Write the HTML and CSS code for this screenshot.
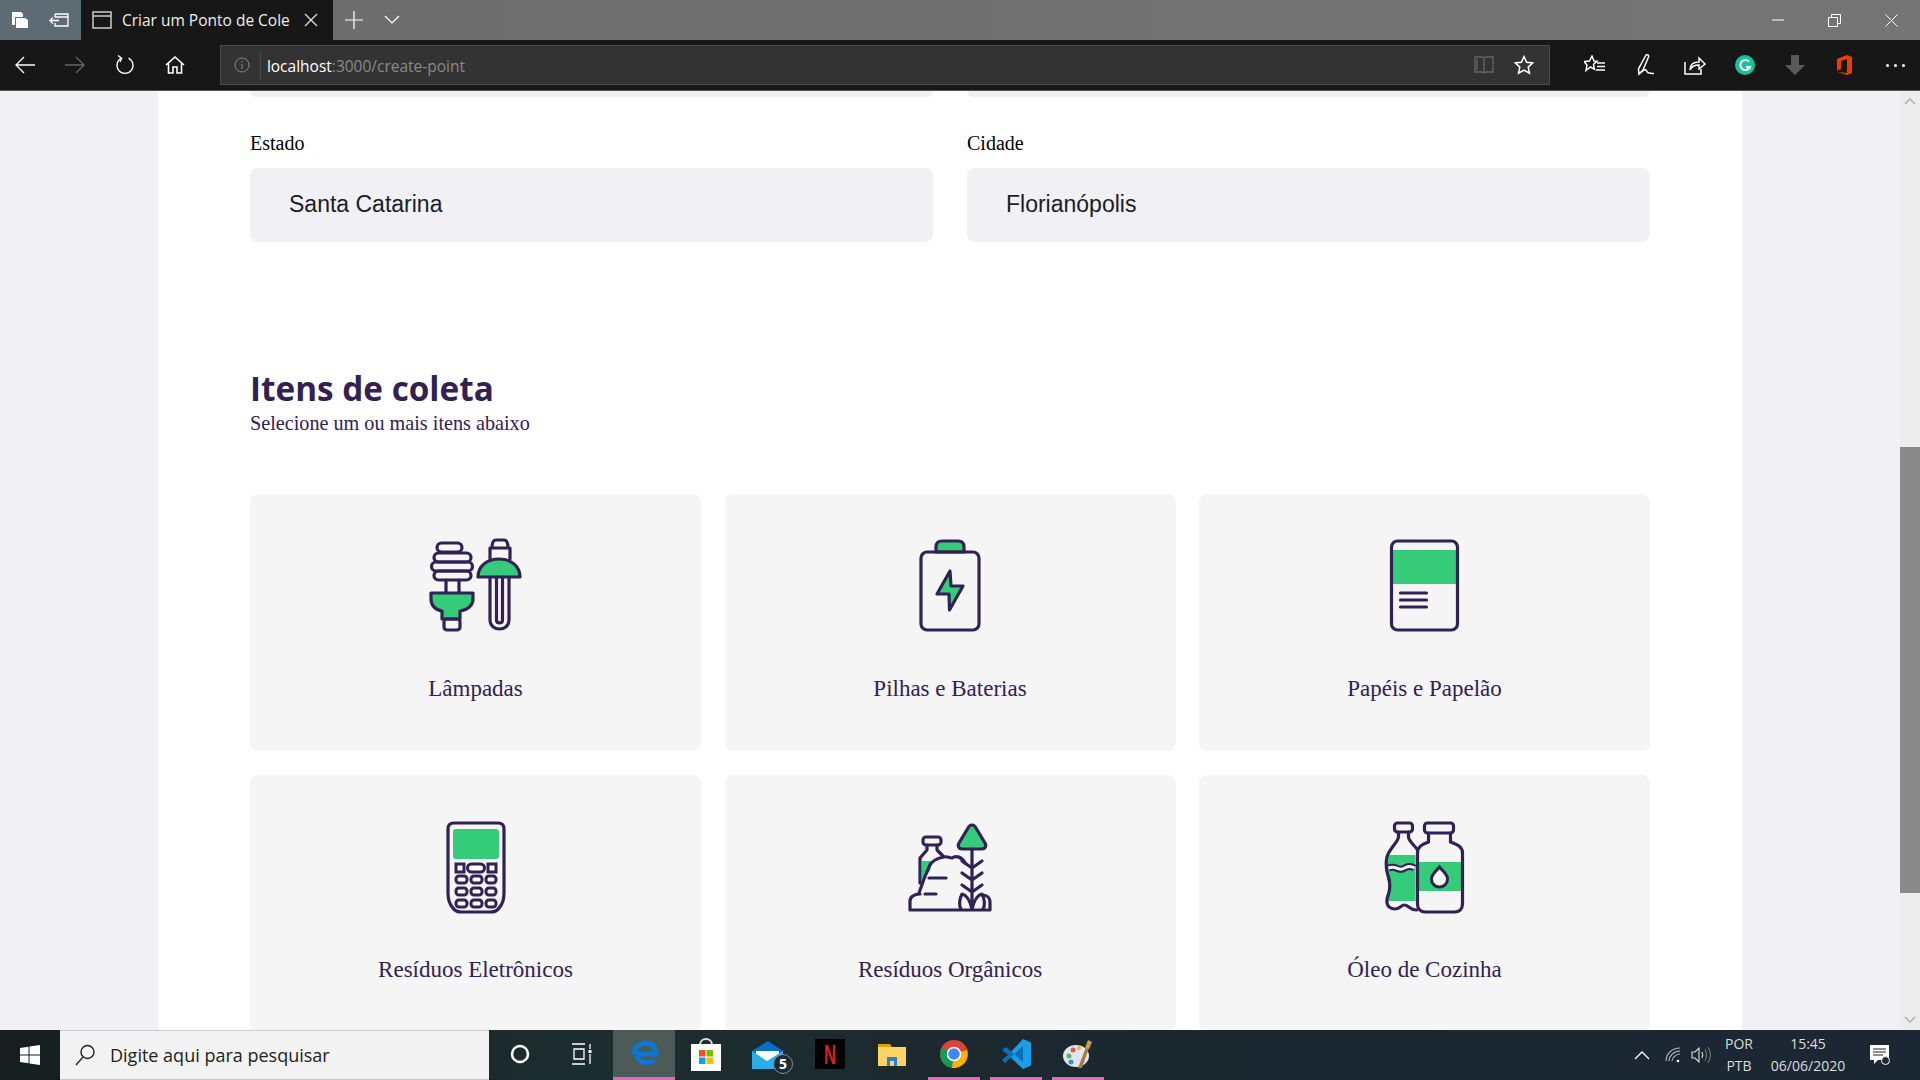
FILE: index.html
```html
<!DOCTYPE html>
<html lang="pt-BR">
<head>
    <meta charset="utf-8">
    <title>Criar um Ponto de Coleta</title>
    <link rel="stylesheet" href="styles.css">
</head>
<body>
    <!-- browser title bar -->
    <div class="titlebar">
        <div class="tab-tools">
            <div class="tool-btn">
                <svg width="20" height="20" viewBox="0 0 20 20"><path d="M2 2h9l2 2v3H5v8H2z" fill="#fff"/><path d="M6 8h9l3 2v8H6z" fill="#fff"/></svg>
            </div>
            <div class="tool-btn">
                <svg width="22" height="20" viewBox="0 0 22 20" fill="none" stroke="#fff" stroke-width="1.3"><path d="M6 4h13v12H6v-3M6 7V4M6 7h13"/><path d="M10 10.500H1M4 7.500l-3 3 3 3"/></svg>
            </div>
        </div>
        <div class="tab">
            <svg width="20" height="20" viewBox="0 0 20 20" fill="none" stroke="#ccc" stroke-width="1.500"><path d="M1 2h18v16H1zM1 6h18"/></svg>
            <span class="tab-title">Criar um Ponto de Coleta</span>
            <svg width="14" height="14" viewBox="0 0 14 14" stroke="#ddd" stroke-width="1.400"><path d="M1 1l12 12M13 1L1 13"/></svg>
        </div>
        <div class="tool-btn new-tab">
            <svg width="18" height="18" viewBox="0 0 18 18" stroke="#fff" stroke-width="1.200"><path d="M9 0v18M0 9h18"/></svg>
        </div>
        <div class="tool-btn tab-list">
            <svg width="16" height="10" viewBox="0 0 16 10" fill="none" stroke="#fff" stroke-width="1.200"><path d="M1 1l7 7 7-7"/></svg>
        </div>
        <div class="win-controls">
            <div class="win-btn"><svg width="12" height="12" viewBox="0 0 12 12" stroke="#fff"><path d="M0 6h12"/></svg></div>
            <div class="win-btn"><svg width="13" height="13" viewBox="0 0 13 13" fill="none" stroke="#fff"><path d="M.5 3.500h9v9h-9zM3.500 3.500v-3h9v9h-3"/></svg></div>
            <div class="win-btn"><svg width="13" height="13" viewBox="0 0 13 13" stroke="#fff"><path d="M.5.500l12 12M12.500.500l-12 12"/></svg></div>
        </div>
    </div>

    <!-- browser toolbar -->
    <div class="toolbar">
        <div class="nav-btn"><svg width="20" height="18" viewBox="0 0 20 18" fill="none" stroke="#fff" stroke-width="1.300"><path d="M20 9H1M9 1L1 9l8 8"/></svg></div>
        <div class="nav-btn"><svg width="20" height="18" viewBox="0 0 20 18" fill="none" stroke="#666" stroke-width="1.300"><path d="M0 9h19M11 1l8 8-8 8"/></svg></div>
        <div class="nav-btn"><svg width="20" height="22" viewBox="0 0 20 22" fill="none" stroke="#fff" stroke-width="1.300"><path d="M13.500 4.200a8 8 0 1 1-7 0M3 1.500l3.700 2.700L5 8"/></svg></div>
        <div class="nav-btn"><svg width="20" height="20" viewBox="0 0 20 20" fill="none" stroke="#fff" stroke-width="1.600"><path d="M1 10l9-8 9 8M3.500 8.500V18H8v-6h4v6h4.500V8.500"/></svg></div>
        <div class="address">
            <svg class="info" width="16" height="16" viewBox="0 0 16 16" fill="none" stroke="#888"><circle cx="8" cy="8" r="7"/><path d="M8 7v5M8 4v1.500"/></svg>
            <span class="url"><span class="host">localhost</span>:3000/create-point</span>
            <svg class="book" width="20" height="18" viewBox="0 0 20 18" fill="none" stroke="#666" stroke-width="1.300"><path d="M1 1h7l2 1 2-1h7v15h-7l-2 1-2-1H1zM10 2v15M3 3v11"/></svg>
            <svg class="star" width="20" height="20" viewBox="0 0 20 20" fill="none" stroke="#fff" stroke-width="1.500"><path d="M10 1.500l2.600 5.700 6.200.7-4.600 4.200 1.300 6.100L10 15.200l-5.500 3 1.300-6.100L1.200 7.900l6.200-.7z"/></svg>
        </div>
        <div class="actions">
            <div class="nav-btn"><svg width="22" height="20" viewBox="0 0 22 20" fill="none" stroke="#fff" stroke-width="1.500"><path d="M8 1l2 5 3 .3-3.500 3 1 5L6.500 12l-4.500 3.500 1-5.500L0 6.500l5.500-.5zM13 8h8M13 11.500h8M12 15h9"/></svg></div>
            <div class="nav-btn"><svg width="22" height="22" viewBox="0 0 22 22" fill="none" stroke="#fff" stroke-width="1.500"><path d="M12 1c2-.7 3 .5 2.500 2L9 16l-4 4-.5-5zM5 20c3-2 5-5 7-4 1 .7 1 3 3 3 2 .2 3 .5 5 .5"/></svg></div>
            <div class="nav-btn"><svg width="22" height="20" viewBox="0 0 22 20" fill="none" stroke="#fff" stroke-width="1.500"><path d="M1 7v12h16v-5M6 15c0-6 4-8 9-8V3l6 6-6 5v-4c-4 0-7 1-9 5z"/></svg></div>
            <div class="nav-btn"><svg width="20" height="20" viewBox="0 0 20 20"><circle cx="10" cy="10" r="10" fill="#15c39a"/><path d="M14 6.500a5 5 0 1 0 1 5.500h-4" fill="none" stroke="#fff" stroke-width="2"/></svg></div>
            <div class="nav-btn"><svg width="20" height="20" viewBox="0 0 20 20"><path d="M6 0h8v10h6l-10 10L0 10h6z" fill="#5a5a5a"/></svg></div>
            <div class="nav-btn"><svg width="16" height="20" viewBox="0 0 16 20"><path d="M0 4l10-4 5 2v16l-5 2-10-3 10 1V4L4 6v8l-4 1.500z" fill="#ea3e00"/></svg></div>
            <div class="nav-btn more"><span class="dot"></span><span class="dot"></span><span class="dot"></span></div>
        </div>
    </div>

    <!-- page -->
    <div class="viewport">
        <div class="page">
            <form class="form-card">
                <div class="field-row">
                    <div class="field-stub"></div>
                    <div class="field-stub"></div>
                </div>
                <div class="field-row selects">
                    <div class="field">
                        <label>Estado</label>
                        <div class="select">Santa Catarina</div>
                    </div>
                    <div class="field">
                        <label>Cidade</label>
                        <div class="select">Florianópolis</div>
                    </div>
                </div>

                <h2>Itens de coleta</h2>
                <p class="hint">Selecione um ou mais itens abaixo</p>

                <div class="items">
                    <div class="item">
                        <svg class="item-icon" viewBox="26 17 100 96">
                            <path class="fill" d="M31 72h42v6c0 6-5 11-13 12v8H42v-8c-7-1-11-6-11-12z"/>
                            <path class="fill" d="M78 56c0-11 9-18 21-18s21 7 21 18z"/>
                            <rect class="line" x="37" y="22" width="25" height="9" rx="4.500"/>
                            <rect class="line" x="34" y="32" width="37" height="9" rx="4.500"/>
                            <rect class="line" x="31.500" y="41" width="41" height="9" rx="4.500"/>
                            <rect class="line" x="34" y="50" width="37" height="9" rx="4.500"/>
                            <path class="line" d="M46 59v13M59 59v13M31 72h42v6c0 6-5 11-13 12v8H42v-8c-7-1-11-6-11-12z"/>
                            <rect class="line" x="44" y="98" width="16" height="11" rx="3"/>
                            <path class="line" d="M92 27c0-5 1-8 4-8h8c3 0 4 3 4 8zM90 38V27h20v11M78 56c0-11 9-18 21-18s21 7 21 18z"/>
                            <path class="line" d="M90 56v43c0 12 19 12 19 0V56M96.500 56v43c0 4 6 4 6 0V56"/>
                        </svg>
                        <span>Lâmpadas</span>
                    </div>
                    <div class="item">
                        <svg class="item-icon" viewBox="10 17 100 96">
                            <path class="fill line" d="M46 31v-5c0-4 2-6 6-6h16c4 0 6 2 6 6v5z"/>
                            <rect class="line" x="31" y="31" width="58" height="78" rx="6"/>
                            <path class="fill line" d="M60 50L47 73h12l.5 16L73 65H61z"/>
                        </svg>
                        <span>Pilhas e Baterias</span>
                    </div>
                    <div class="item">
                        <svg class="item-icon" viewBox="4.500 17 100 96">
                            <rect class="fill" x="22" y="29" width="64" height="34"/>
                            <rect class="line" x="21" y="20" width="66" height="89" rx="6"/>
                            <path class="line" d="M30 72h26M30 79h26M30 86h26"/>
                        </svg>
                        <span>Papéis e Papelão</span>
                    </div>
                    <div class="item">
                        <svg class="item-icon" viewBox="-4 8 100 96">
                            <rect class="fill" x="23" y="18" width="46" height="30" rx="3"/>
                            <path class="line" d="M24 12h44c4 0 6 2 6 6v64c0 7-2 12-5 15-2 3-5 4-8 4H31c-3 0-6-1-8-4-3-3-5-8-5-15V18c0-4 2-6 6-6z"/>
                            <rect class="key" x="26" y="53" width="8" height="8"/>
                            <rect class="key" x="37.500" y="53" width="17" height="8" rx="4"/>
                            <rect class="key" x="58" y="53" width="8" height="8"/>
                            <rect class="key" x="26" y="65" width="11" height="7" rx="3"/>
                            <rect class="key" x="41" y="65" width="11" height="7" rx="3"/>
                            <rect class="key" x="56" y="65" width="10" height="7" rx="3"/>
                            <rect class="key" x="26" y="77" width="11" height="7" rx="3"/>
                            <rect class="key" x="41" y="77" width="11" height="7" rx="3"/>
                            <rect class="key" x="56" y="77" width="10" height="7" rx="3"/>
                            <rect class="key" x="26" y="89" width="11" height="7" rx="3"/>
                            <rect class="key" x="41" y="89" width="11" height="7" rx="3"/>
                            <rect class="key" x="56" y="89" width="10" height="7" rx="3"/>
                        </svg>
                        <span>Resíduos Eletrônicos</span>
                    </div>
                    <div class="item">
                        <svg class="item-icon" viewBox="10 8 100 96">
                            <path class="fill" d="M32 50h10l-2 10-8 8z"/>
                            <path class="fill line" d="M82 14c-2 0-3 1-4 3L69 32c-2 3 0 6 3 6h20c3 0 5-3 3-6L86 17c-1-2-2-3-4-3z"/>
                            <rect class="line" x="33" y="26" width="18" height="8" rx="3"/>
                            <path class="line" d="M37 34v5l-7 8v25M47 34v5l6 6"/>
                            <path class="line" d="M29 82l5-14 5-12c2-6 9-9 15-10 3-1 5 1 8 1 4-3 10-1 13 5"/>
                            <path class="line" d="M39 67h17M35 83h11"/>
                            <path class="line" d="M20 99v-9c0-4 4-7 10-7M20 99h80v-8c0-3-2-7-8-7"/>
                            <path class="line" d="M82 38v60M72 50l10 7 10-7M72 62l10 7 10-7M72 74l10 7 10-7M82 98c-2-8-5-14-10-15-3 5-3 12-1 15M82 98c2-8 5-14 10-15 3 5 3 12 1 15"/>
                        </svg>
                        <span>Resíduos Orgânicos</span>
                    </div>
                    <div class="item">
                        <svg class="item-icon" viewBox="4.500 8 100 96">
                            <path class="fill" d="M18 44h27v46H16c-1-4 2-8 2-14 0-4-2-8-2-14 0-7 0-12 2-18z"/>
                            <path class="fill" d="M47 51h45v29H47z"/>
                            <path class="wave-edge" d="M18 57c7-3 10 3 14 1s7-4 12-1"/>
                            <path class="wave" d="M18 57c7-3 10 3 14 1s7-4 12-1"/>
                            <rect class="line" x="24" y="12" width="18" height="9" rx="3"/>
                            <path class="line" d="M28 21v5c0 5-11 13-12 22-1 7 0 12 2 18 2 7 2 11 0 17-2 5-4 14 6 15 6 0 6-4 10-4 4 0 5 5 12 5"/>
                            <path class="line" d="M38 21v5c0 4 6 8 9 13"/>
                            <rect class="line" x="54" y="12" width="29" height="10" rx="3"/>
                            <path class="line" d="M58 22v9c-5 2-11 4-11 11v51c0 5 3 8 8 8h29c5 0 8-3 8-8V42c0-7-7-9-12-11v-9"/>
                            <path class="drop" d="M69 56c-3 4-8 7-8 12 0 5 4 8 8 8s8-3 8-8c0-5-5-8-8-12z"/>
                        </svg>
                        <span>Óleo de Cozinha</span>
                    </div>
                </div>
            </form>
        </div>
        <div class="scrollbar">
            <div class="arrow"><svg width="12" height="8" viewBox="0 0 12 8" fill="none" stroke="#aaa" stroke-width="1.300"><path d="M1 7l5-5 5 5"/></svg></div>
            <div class="thumb"></div>
            <div class="arrow arrow-down"><svg width="12" height="8" viewBox="0 0 12 8" fill="none" stroke="#aaa" stroke-width="1.300"><path d="M1 1l5 5 5-5"/></svg></div>
        </div>
    </div>

    <!-- windows taskbar -->
    <div class="taskbar">
        <div class="start">
            <svg width="20" height="20" viewBox="0 0 20 20" fill="#fff"><path d="M0 3l8.500-1.200v7.700H0zM9.500 1.600L20 0v9.500H9.500zM0 10.500h8.500v7.700L0 17zM9.500 10.500H20V20L9.500 18.400z"/></svg>
        </div>
        <div class="search">
            <svg width="20" height="22" viewBox="0 0 20 22" fill="none" stroke="#222" stroke-width="1.400"><circle cx="12.500" cy="8" r="6.500"/><path d="M8 13l-7 8"/></svg>
            <span>Digite aqui para pesquisar</span>
        </div>
        <div class="task-btn"><svg width="20" height="20" viewBox="0 0 20 20" fill="none" stroke="#fff" stroke-width="2.500"><circle cx="10" cy="10" r="8"/></svg></div>
        <div class="task-btn"><svg width="20" height="22" viewBox="0 0 20 22" fill="none" stroke="#fff" stroke-width="1.300"><path d="M0 1h13M0 21h13M2 6h10v10H2zM18 1v5M18 11v10"/><path d="M18 7v3" stroke-width="3"/></svg></div>
        <div class="task-btn active">
            <svg width="30" height="30" viewBox="0 0 30 30" fill="none" stroke="#0a78d7" stroke-width="5"><path d="M4 15C6 7 12 4 17 4c6 0 10 5 10 11H8c0 8 10 11 18 6"/></svg>
        </div>
        <div class="task-btn">
            <svg width="30" height="34" viewBox="0 0 30 34"><path d="M9 8c0-8 12-8 12 0v4" fill="none" stroke="#ddd" stroke-width="2"/><rect y="7" width="30" height="27" fill="#fff"/><rect x="8" y="13" width="6.500" height="6.500" fill="#f25022"/><rect x="15.500" y="13" width="6.500" height="6.500" fill="#7fba00"/><rect x="8" y="20.500" width="6.500" height="6.500" fill="#00a4ef"/><rect x="15.500" y="20.500" width="6.500" height="6.500" fill="#ffb900"/></svg>
        </div>
        <div class="task-btn">
            <svg width="52" height="40" viewBox="0 0 52 40"><g transform="translate(10 5)"><path d="M0 12L16 2l15 10v18H0z" fill="#0a6fc2"/><path d="M4 12h23v10H4z" fill="#fff"/><path d="M0 12l15 10 16-10v18H0z" fill="#2aaee8"/></g><circle cx="41" cy="30" r="9.500" fill="#1c2b33" stroke="#8a8f94"/><text class="badge" x="41" y="35">5</text></svg>
        </div>
        <div class="task-btn">
            <svg width="30" height="30" viewBox="0 0 30 30"><rect width="30" height="30" fill="#000"/><text class="netflix" x="9" y="25" textLength="12" lengthAdjust="spacingAndGlyphs">N</text></svg>
        </div>
        <div class="task-btn">
            <svg width="28" height="24" viewBox="0 0 28 24"><path d="M0 2h12l2 3h14v4H0z" fill="#d9a404"/><path d="M0 5h28v19H0z" fill="#fcd462"/><path d="M9 24v-9h10v9h-3v-5h-4v5z" fill="#2a7fd5"/></svg>
        </div>
        <div class="task-btn open">
            <svg width="28" height="28" viewBox="0 0 28 28"><circle cx="14" cy="14" r="14" fill="#db4437"/><path d="M14 14L1.500 8A14 14 0 0 0 12 27.900z" fill="#0f9d58"/><path d="M14 14l-2 14a14 14 0 0 0 15-18z" fill="#f4b400"/><circle cx="14" cy="14" r="6.500" fill="#4285f4" stroke="#fff" stroke-width="1.500"/></svg>
        </div>
        <div class="task-btn open">
            <svg width="30" height="30" viewBox="0 0 30 30"><path d="M22 0l8 3.500v23L22 30 7 16z" fill="#1a9fe6"/><path d="M22 7v16L5 8 1 11l6 5 -6 5 3 3 L22 7z" fill="#0a6fb8"/></svg>
        </div>
        <div class="task-btn open">
            <svg width="30" height="30" viewBox="0 0 30 30"><ellipse cx="13" cy="17" rx="13" ry="11" fill="#dfe8ef"/><circle cx="6" cy="17" r="2.500" fill="#58b368"/><circle cx="10" cy="11" r="2.500" fill="#e8574d"/><circle cx="16" cy="9" r="2" fill="#f0b23c"/><circle cx="8" cy="23" r="2.500" fill="#3f8fd6"/><path d="M15 29L23 8l3 1-7 20z" fill="#a87a42"/><path d="M22 9l3-8 4 2-3 7z" fill="#d89a4e"/></svg>
        </div>
        <div class="tray">
            <div class="tray-item chev"><svg width="16" height="9" viewBox="0 0 16 9" fill="none" stroke="#fff" stroke-width="1.300"><path d="M1 8l7-7 7 7"/></svg></div>
            <div class="tray-item wifi"><svg width="16" height="16" viewBox="0 0 16 16" fill="none" stroke="#bbb" stroke-width="1.100"><path d="M1 14C1 7 7 1 15 1M4 14c0-5 5-10 11-10M7 14c0-3 4-7 8-7"/><circle cx="13" cy="14" r="1.300" fill="#fff" stroke="none"/></svg></div>
            <div class="tray-item vol"><svg width="22" height="18" viewBox="0 0 22 18" fill="none" stroke="#ddd" stroke-width="1.100"><path d="M1 6h3l4-4v14l-4-4H1zM11 6c1 2 1 4 0 6"/><path d="M14 3c2 4 2 8 0 12M17 1c3 5 3 11 0 16" stroke="#777"/></svg></div>
            <div class="tray-item lang"><span>POR</span><span>PTB</span></div>
            <div class="tray-item clock"><span>15:45</span><span>06/06/2020</span></div>
            <div class="tray-item notif"><svg width="22" height="22" viewBox="0 0 22 22"><path d="M1 1h19v15H9l-4 4v-4H1z" fill="#fff"/><path d="M4 5h13M4 8h13M4 11h10" stroke="#222"/><circle cx="16.500" cy="16.500" r="4" fill="#1c2b33" stroke="#fff"/></svg></div>
        </div>
    </div>
</body>
</html>
```

FILE: styles.css
```css
* {
    box-sizing: border-box;
}
body {
    margin: 0;
    width: 1920px;
    height: 1080px;
    display: flex;
    flex-direction: column;
    overflow: hidden;
    font-family: "Liberation Serif", serif;
    background: #f0f0f5;
}

/* title bar */
.titlebar {
    height: 40px;
    display: flex;
    align-items: stretch;
    background: linear-gradient(90deg, #6c6c6c, #757575);
}
.tab-tools {
    width: 81px;
    display: flex;
    background: #5d6b75;
}
.tool-btn {
    width: 40px;
    display: flex;
    align-items: center;
    justify-content: center;
}
.tab {
    width: 252px;
    display: flex;
    align-items: center;
    padding: 0 13px 0 11px;
    background: #171717;
}
.tab-title {
    width: 168px;
    margin: 0 14px 0 10px;
    overflow: hidden;
    white-space: nowrap;
    color: #eee;
    font: 15.500px "Open Sans", sans-serif;
}
.new-tab {
    margin-left: 1px;
}
.tab-list {
    margin-left: -2px;
}
.win-controls {
    margin-left: auto;
    display: flex;
}
.win-btn {
    width: 57px;
    display: flex;
    align-items: center;
    justify-content: center;
}

/* toolbar */
.toolbar {
    height: 51px;
    display: flex;
    align-items: center;
    background: #171717;
    border-bottom: 1px solid #555;
}
.nav-btn {
    width: 50px;
    height: 50px;
    display: flex;
    align-items: center;
    justify-content: center;
}
.address {
    width: 1331px;
    height: 40px;
    margin-left: 20px;
    display: flex;
    align-items: center;
    background: #333;
    border: 1px solid #4a4a4a;
}
.info {
    margin-left: 13px;
}
.url {
    margin: 2px 0 0 10px;
    padding-left: 6px;
    height: 28px;
    border-left: 1px solid #4a4a4a;
    color: #8a8a8a;
    font: 15.500px/28px "Open Sans", sans-serif;
}
.host {
    color: #fff;
}
.book {
    margin-left: auto;
}
.star {
    margin: 0 15px 0 20px;
}
.actions {
    margin-left: 20px;
    display: flex;
}
.more {
    gap: 5px;
}
.dot {
    width: 3px;
    height: 3px;
    background: #fff;
    border-radius: 50%;
}

/* page */
.viewport {
    flex: 1;
    min-height: 0;
    display: flex;
}
.page {
    flex: 1;
    display: flex;
    justify-content: center;
    overflow: hidden;
}
.form-card {
    width: 1584px;
    padding: 0 92px;
    background: #fff;
}
.field-row {
    display: flex;
    gap: 34px;
}
.field-stub {
    flex: 1;
    height: 6px;
    background: #f0f0f5;
    border-radius: 0 0 8px 8px;
}
.selects {
    margin-top: 35px;
}
.field {
    flex: 1;
}
.field label {
    display: block;
    height: 23px;
    margin-bottom: 13px;
    font-size: 20px;
    line-height: 23px;
}
.select {
    height: 74px;
    padding-left: 39px;
    background: #f0f0f5;
    border-radius: 8px;
    color: #1c1c26;
    font: 23px/72px "Liberation Sans", sans-serif;
}
h2 {
    margin: 125px 0 0;
    height: 44px;
    color: #322153;
    font: 700 33.300px/42px "Open Sans", sans-serif;
}
.hint {
    margin: 0;
    color: #322153;
    font-size: 20.200px;
    line-height: 24px;
}
.items {
    margin-top: 59px;
    display: grid;
    grid-template-columns: repeat(3, 1fr);
    gap: 24px 23.500px;
}
.item {
    height: 257px;
    padding-top: 44px;
    display: flex;
    flex-direction: column;
    align-items: center;
    background: #f5f5f5;
    border-radius: 8px;
    color: #322153;
    font-size: 23px;
    line-height: 24px;
}
.item span {
    margin-top: 43px;
}
.item-icon {
    width: 100px;
    height: 96px;
}
.line {
    fill: none;
    stroke: #322153;
    stroke-width: 3.200;
    stroke-linejoin: round;
    stroke-linecap: round;
}
.fill {
    fill: #34cb79;
}
.fill.line {
    fill: #34cb79;
}
.key {
    fill: #fff;
    stroke: #322153;
    stroke-width: 3;
}
.wave-edge {
    fill: none;
    stroke: #322153;
    stroke-width: 7;
}
.wave {
    fill: none;
    stroke: #f5f5f5;
    stroke-width: 3;
}
.drop {
    fill: #fff;
    stroke: #322153;
    stroke-width: 3;
}

/* scrollbar */
.scrollbar {
    width: 20px;
    display: flex;
    flex-direction: column;
    align-items: stretch;
    background: #ececec;
}
.arrow {
    height: 20px;
    display: flex;
    align-items: center;
    justify-content: center;
}
.thumb {
    height: 446px;
    margin-top: 336px;
    background: #8a8a8a;
}
.arrow-down {
    margin-top: auto;
}

/* taskbar */
.taskbar {
    height: 50px;
    display: flex;
    align-items: stretch;
    background: linear-gradient(90deg, #161e1e 0%, #1c2d2e 30%, #1c2830 60%, #1b2733 100%);
    color: #fff;
}
.start {
    width: 60px;
    display: flex;
    align-items: center;
    justify-content: center;
}
.search {
    width: 429px;
    display: flex;
    align-items: center;
    gap: 15px;
    padding-left: 15px;
    background: #f2f2f2;
    border: solid #c8c8c8;
    border-width: 1px 0;
    color: #222;
    font: 18px "Open Sans", sans-serif;
}
.task-btn {
    width: 62px;
    display: flex;
    align-items: center;
    justify-content: center;
    border-bottom: 3px solid transparent;
}
.task-btn.active {
    background: #4c5a58;
    border-bottom-color: #e06cb8;
}
.task-btn.open {
    width: 52px;
    margin: 0 5px;
    border-bottom-color: #e06cb8;
}
.badge {
    fill: #fff;
    font: 700 14px "Open Sans", sans-serif;
    text-anchor: middle;
}
.netflix {
    fill: #d81f26;
    font: 700 28px "Liberation Sans", sans-serif;
}
.tray {
    margin-left: auto;
    display: flex;
    padding-right: 14px;
}
.tray-item {
    display: flex;
    flex-direction: column;
    align-items: center;
    justify-content: center;
    color: #ddd;
    font: 14px/22px "Open Sans", sans-serif;
}
.chev {
    width: 32px;
}
.wifi {
    width: 30px;
}
.vol {
    width: 28px;
}
.lang {
    width: 46px;
}
.clock {
    width: 92px;
}
.notif {
    width: 52px;
}
```
